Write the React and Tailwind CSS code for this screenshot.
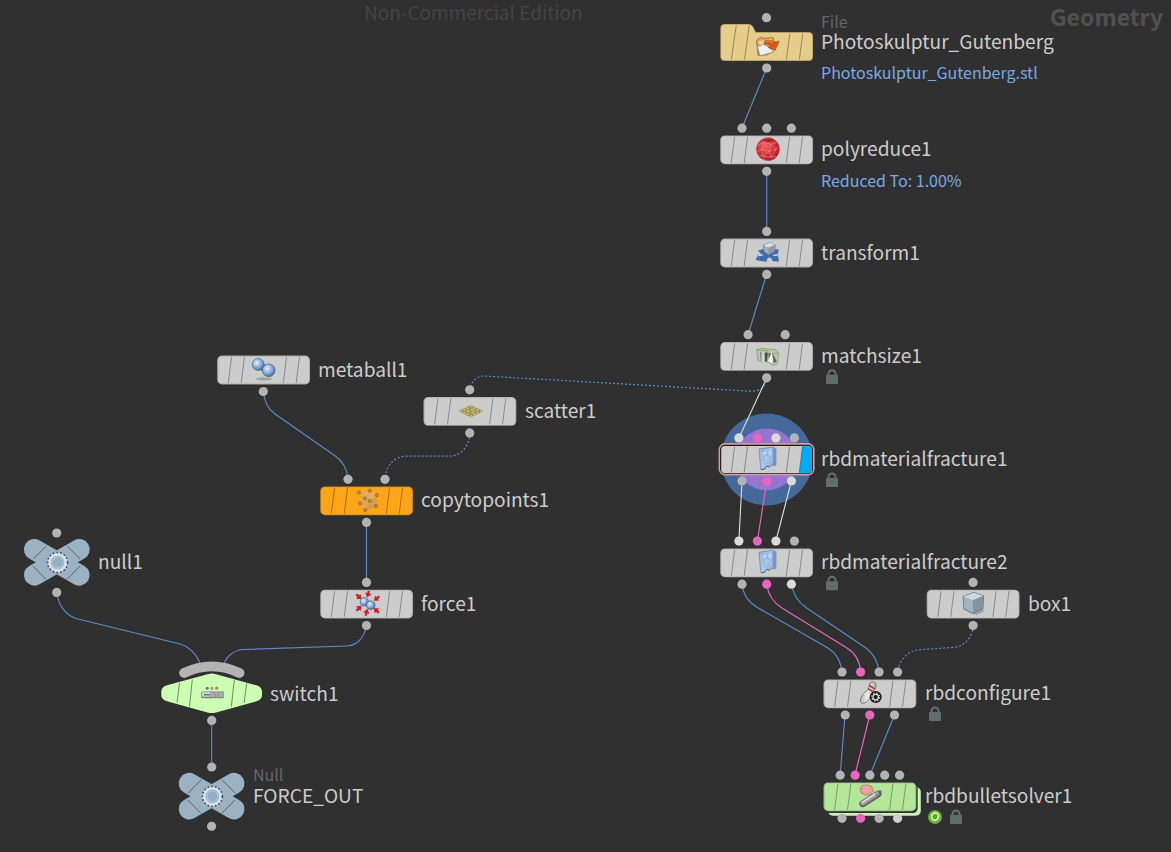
import React from "react";

const WIRE = "#5b8bcb";
const PINK = "#e866bf";
const LIGHT = "#dadada";
const DOT = "#b3b3b3";

/* ---------- icons (24 x 24 boxes) ---------- */

function PolyReduceIcon() {
  return (
    <g>
      <circle cx="12" cy="11.8" r="11.4" fill="url(#redBall)" stroke="#a52a30" strokeWidth=".6" />
      <path
        d="M2 8L8 5L15 7L21 5M8 5L6 12L1.5 14M6 12L13 14L15 7M13 14L20 12L15 7M20 12L22.5 10M6 12L7 19L13 14L15 20L20 12M7 19L15 20M3.5 18L7 19L9 22.5M15 20L20 19"
        fill="none"
        stroke="#f08c8c"
        strokeWidth=".6"
      />
      <path d="M6 3.4Q12 .2 18 3.4L12 4.8Z" fill="#8f1219" opacity=".75" />
    </g>
  );
}

function TransformIcon() {
  return (
    <g>
      <path
        d="M2 10L7.5 8.6L18 8.6L22.8 9.2L21.8 13.4L18.5 14L22 15L22.8 20L16.5 19.6L14.5 17L12 17.2L10.5 20.4L0 18.6L2.2 14.4L5.2 13.8Z"
        fill="#3d6dad"
      />
      <path d="M0 18.6L10.5 20.4V21.2L0 19.6ZM16.5 19.6L22.8 20V20.9L16.5 20.4Z" fill="#27497c" />
      <path d="M5.2 13.8L8 14.5L3.5 15.8L2.2 14.4ZM18.5 14L16 14.4L19.5 15.6L22 15Z" fill="#dfe5ea" />
      <path d="M7.3 4.5L14.3 1.8L19.3 4.3L18.6 10.8L12.5 14.2L8 11.2Z" fill="#a3b0ba" stroke="#6e7a85" strokeWidth=".7" />
      <path d="M7.6 4.6L14.3 2.1L19 4.3L12.5 7.2Z" fill="#d5dde3" />
      <path d="M12.5 7.2L19 4.4L18.3 10.7L12.5 13.8Z" fill="#8c9aa7" />
    </g>
  );
}

function MatchSizeIcon() {
  return (
    <g>
      <path d="M.5 6L6 4.5L20 6L22.5 9L21.5 19L17 21.5L11 17.5L2 17Z" fill="#b3c6a0" opacity=".8" />
      <path
        d="M.5 6L12 7M.5 6L2 17L12 18M.5 6L6 4.5L20 6L22.5 9L21.5 20L17 21.5M12 10L22.5 9M12 7V18L17 21.5"
        fill="none"
        stroke="#84a26c"
        strokeWidth=".8"
      />
      <path d="M4 8.6Q7.8 7 11.4 8.6L11 17Q8 18.7 4.8 17Z" fill="url(#steel)" />
      <path d="M8.8 9L11.5 8.8L11 17.2L9.2 17.8Z" fill="#474e45" />
      <path d="M12.2 9.5L15.6 9.5L13 15.5Z" fill="#6a7264" />
      <path d="M16 8L20.8 17.3Q16.5 21 11.8 17Z" fill="#f0f2ee" />
      <path d="M16 8L20.8 17.3Q19.4 19 17.4 19Z" fill="#5f665b" />
    </g>
  );
}

function FractureIcon() {
  return (
    <g>
      <path
        d="M3 2L16.5 0L20 1.5L19.8 18L16.5 18.8L15 17.5L13.7 20L11 19L8.5 22L5 22.5L4.3 17Z"
        fill="url(#glass)"
        stroke="#7187a6"
        strokeWidth=".8"
      />
      <path d="M16.5 .5L20 1.5L19.8 18L16.8 18.5Z" fill="#7796c4" />
      <path d="M5 4L9 3.5M12 3L11.3 8L14 10L12 15M11.3 8L6 10M14 10L16.5 9M4.5 13L8 12.5L9 17" fill="none" stroke="#8aa6cf" strokeWidth=".6" />
      <path d="M7 5.5L9.5 5L9 7.5ZM12.5 5L15 4.5L14 7Z" fill="#dceafb" />
      <path d="M5 22.5L8.5 22L11 19L13.7 20" fill="none" stroke="#4f6382" strokeWidth=".9" />
    </g>
  );
}

function BoxIcon() {
  return (
    <g>
      <path d="M10 22L20 17L22 20L14 23.5Z" fill="#8b8b8b" opacity=".6" />
      <path d="M.7 5L11.5 1L21 4.2L20.3 16.8L10.6 22L1.5 17.2Z" fill="#9fb0bc" stroke="#6e777e" strokeWidth="1.2" />
      <path d="M.9 5L11.5 1.2L20.8 4.2L10.5 8.7Z" fill="#cdd8df" />
      <path d="M10.5 8.7L20.8 4.3L20 16.7L10.5 21.6Z" fill="#8394a1" />
      <path d="M1 5.4L10.5 8.7V21.3L1.8 17Z" fill="#a3b4c0" />
    </g>
  );
}

function ConfigureIcon() {
  return (
    <g>
      <path
        d="M12.5.6Q16.8.4 16.8 4.3Q16.5 7 14.3 9.4Q13 13 10.5 17Q7 22.6 3 22.3Q.3 21.5 1.3 17.5Q3 12.5 8 8.7Q10 6.5 10 4Q10.2 1.2 12.5.6Z"
        fill="url(#pin)"
        stroke="#74726b"
        strokeWidth=".9"
      />
      <path d="M10 4.2L15.8 7.8M8.8 7.3L13.4 10.2" stroke="#a83a42" strokeWidth="1.6" />
      <circle cx="16.4" cy="15.8" r="6" fill="#1a1a1a" />
      <circle cx="16.4" cy="15.8" r="2.7" fill="none" stroke="#d6d6d6" strokeWidth="1.3" />
      <circle cx="16.4" cy="15.8" r="3.9" fill="none" stroke="#d6d6d6" strokeWidth="1.3" strokeDasharray="1.5 1.56" />
    </g>
  );
}

function BulletIcon() {
  return (
    <g>
      <path d="M.5 4L3 1.2L8 .6L12.5 2.2L13.8 6L12 10L6.5 11L2 8.8Z" fill="#e39c9c" stroke="#b57373" strokeWidth=".8" />
      <path d="M3 3.5L7 2L11 4M7 2L6.5 6L11.5 7M2.5 6.5L6.5 6L6 10" fill="none" stroke="#efb9b9" strokeWidth=".7" />
      <path d="M3.4 19.6L18.8 9.8" stroke="#58585a" strokeWidth="6.6" strokeLinecap="round" />
      <path d="M3.3 19L18.5 9" stroke="#a0a0a2" strokeWidth="4.6" strokeLinecap="round" />
      <path d="M3 18L17 8.8" stroke="#e0e0e2" strokeWidth="1.5" strokeLinecap="round" />
      <path d="M5 21L19 11.8" stroke="#77777a" strokeWidth="1.2" />
      <path d="M15.5 7.2L19 12.6" stroke="#5e5e61" strokeWidth=".9" />
      <path d="M18 6.2L22 6.2L22.3 9L20.8 11Z" fill="#5a6678" />
    </g>
  );
}

function MetaballIcon() {
  return (
    <g>
      <ellipse cx="11" cy="21.4" rx="8" ry="1.6" fill="#8c948c" opacity=".7" />
      <path d="M8 5L17 10L13 16L5 11Z" fill="#4d76ad" />
      <circle cx="5.2" cy="7" r="6" fill="url(#blueBall)" stroke="#44699b" strokeWidth=".7" />
      <circle cx="15.7" cy="12.8" r="6.3" fill="url(#blueBall)" stroke="#365a8d" strokeWidth=".7" />
    </g>
  );
}

function ScatterIcon() {
  const pts = [[1.2, 12], [4.8, 10.6], [8, 9], [11.5, 7.2], [15, 9], [18.3, 10.7], [21.7, 12], [18, 13.8], [14.8, 15.4], [11.5, 17.3], [8, 15.4], [4.8, 13.6], [9, 12], [13, 10.8], [14, 13.2]];
  return (
    <g>
      <path d="M0 12.2L11.5 6.8L23 12.2L11.5 18Z" fill="#9c9877" stroke="#77745a" strokeWidth=".7" />
      {pts.map(([x, y]) => (
        <circle key={x + "-" + y} cx={x} cy={y} r="1.25" fill="#d8cb68" stroke="#958c4c" strokeWidth=".4" />
      ))}
    </g>
  );
}

function CopyIcon() {
  const pts = [[3, 4.3], [13.7, 2.4], [21, 6.7], [20, 17.7], [9.3, 21.7], [4, 15], [9, 10], [13.7, 12.7]];
  return (
    <g>
      <path d="M4.5 5.5L13.5 3L21 7L20.3 18L10.5 22L4 16Z" fill="#dfa64e" />
      <path d="M4.5 5.5L13.7 12.7L21 7L13.5 3Z" fill="#e2ad5b" />
      <path d="M13.7 12.7L21 7L20.3 18L10.5 22Z" fill="#d59c46" />
      {pts.map(([x, y]) => (
        <circle key={x + "-" + y} cx={x} cy={y} r="1.6" fill="#c08a55" stroke="#935f28" strokeWidth=".7" />
      ))}
    </g>
  );
}

function ForceIcon() {
  const arrows = [[3.1, 5.4, 42], [12, 2.9, 105], [20.3, 7.2, 140], [3.2, 16.4, -42], [10.6, 20.3, -75], [20, 18.6, -138]];
  return (
    <g>
      {arrows.map(([x, y, r]) => (
        <path key={r} transform={`translate(${x} ${y}) rotate(${r})`} d="M-3.8-1.2H-1.2V-3.3L3.2 0L-1.2 3.3V1.2H-3.8Z" fill="#cf2027" />
      ))}
      <circle cx="8.3" cy="10.2" r="4.1" fill="url(#blueBall)" stroke="#44699b" strokeWidth=".7" />
      <circle cx="14.7" cy="13.6" r="4.3" fill="url(#blueBall)" stroke="#365a8d" strokeWidth=".7" />
    </g>
  );
}

function FileIcon() {
  return (
    <g>
      <path d="M.5 3.5L4.5.5L8 1.5L17 .8L18.3 5L12 18L2 18.5Z" fill="#d8a066" stroke="#9c6a35" strokeWidth=".8" />
      <path d="M2 4.5L16 1.5L15 5L4 10Z" fill="#f0cfa0" />
      <path d="M1.2 9.5L5 9L7 7L13 10.5L17.8 15.3L4 19Z" fill="#eef0f3" stroke="#8f8475" strokeWidth=".8" />
      <path d="M8.5 4.2Q13.5 1.6 17.8 5.2L23.2 4.4L19.2 13.6L12 10.6L14.6 9.4Q12 6.4 8.5 7.4Z" fill="#d65a14" stroke="#b04309" strokeWidth=".5" />
      <path d="M10 4.8Q14 3.2 17 6.2" fill="none" stroke="#f0954f" strokeWidth="1" />
    </g>
  );
}

/* ---------- pieces of the graph ---------- */

const TILE_LINES = [14.6, 27.5, 69.6, 82.5];

function Tile({ x, y, fill = "#cccccc", edge = "#aaaaaa", icon: Icon, flag }) {
  return (
    <g transform={`translate(${x} ${y})`}>
      <rect x=".2" y=".4" width="92.8" height="28.8" rx="4.7" fill={edge} />
      <rect x="1.2" y="1.2" width="90.8" height="27.2" rx="3.8" fill={fill} />
      {flag && <path d="M82.5 1L79.3 28.2H88.5Q92 28.2 92 25V4.5Q92 1 88.5 1Z" fill="#00adf2" />}
      {TILE_LINES.map((l) => (
        <path key={l} d={`M${l} 1.8L${l - 3.3} 27.8`} stroke="#000" strokeOpacity=".33" strokeWidth="1" />
      ))}
      <g transform="translate(36 2.3)">
        <Icon />
      </g>
    </g>
  );
}

function NullNode({ x, y }) {
  return (
    <g transform={`translate(${x} ${y})`}>
      <path d="M-22.4-12.8L22.4 12.8M22.4-12.8L-22.4 12.8" stroke="#9bb2c5" strokeWidth="21" strokeLinecap="round" />
      <path d="M-10.3-16.5L-23.5-3.2M10.3-16.5L23.5-3.2M-24 3.6L-10.8 17M23.5 3.6L10.3 17" stroke="#566573" strokeWidth="1" />
      <circle cx=".8" cy=".2" r="8.4" fill="#8dabc4" stroke="#dbe0e4" strokeWidth="3.2" />
      <circle cx=".8" cy=".2" r="10" fill="none" stroke="#3f4a54" strokeWidth="1.5" strokeDasharray="1.7 2.1" />
      <circle cx=".8" cy=".2" r="5.6" fill="#8fb0cb" stroke="#b4c6d4" strokeWidth="1.2" />
    </g>
  );
}

function SwitchNode() {
  return (
    <g>
      <path d="M184 673Q211.7 659.8 239.6 673" fill="none" stroke="#b3b3b3" strokeWidth="9.8" strokeLinecap="round" />
      <path
        d="M167 685.3L207.5 674.2Q211.7 673 216 674.2L256.5 685.3Q262 687.2 262 691.5V695.3Q262 699.5 256.5 701.3L216 712.4Q211.7 713.6 207.5 712.4L167 701.3Q161.3 699.5 161.3 695.3V691.5Q161.3 687.2 167 685.3Z"
        fill="#ccffb3"
      />
      <path d="M179.5 683L177 702.7M192.3 679.5L189.5 706.7M234.3 680L231.3 706.7M246.7 683.3L244 703" stroke="#718a66" strokeWidth="1" />
      <g>
        <circle cx="207.2" cy="688.2" r="1.5" fill="#6b7f78" />
        <circle cx="211.9" cy="688.2" r="1.5" fill="#8b9c92" />
        <circle cx="216.7" cy="688.2" r="1.6" fill="#dc7443" />
        <rect x="201.2" y="691.5" width="22.6" height="6.8" rx="1.4" fill="#7d8385" />
        <rect x="202" y="692.3" width="8.5" height="4.4" rx="1" fill="#d3d7d8" />
        <path d="M203.8 694.8H210" stroke="#585d5f" strokeWidth="1.2" />
        <rect x="210.5" y="692.3" width="12.5" height="4.9" rx="1.5" fill="#a9afb0" />
        <path d="M215 692.5V697M218.2 692.5V697" stroke="#7d8284" strokeWidth=".7" />
      </g>
    </g>
  );
}

function Lock({ x, y }) {
  return (
    <g transform={`translate(${x} ${y})`}>
      <path d="M-3.5-2V-3.4A3.5 3.5 0 0 1 3.5-3.4V-2" fill="none" stroke="#65716f" strokeWidth="2" />
      <rect x="-6" y="-2.4" width="12" height="9.1" rx=".6" fill="#5f6e6b" />
    </g>
  );
}

const dots = [
  [766.5, 17.7], [766.7, 68], [742, 128.2], [766.7, 128.2], [791.4, 128.2], [766.7, 171.3],
  [766.7, 231.4], [766.7, 274.4], [748.1, 334.7], [785.2, 334.7], [766.7, 377.8],
  [738.9, 437.9, LIGHT], [757.4, 437.9, PINK], [775.9, 437.9, LIGHT], [794.4, 437.9],
  [742, 481], [766.7, 481, PINK], [791.4, 481, LIGHT],
  [738.9, 541.1, LIGHT], [757.4, 541.1, PINK], [775.9, 541.1, LIGHT], [794.4, 541.1],
  [742, 584.2], [766.7, 584.2, PINK], [791.4, 584.2, LIGHT],
  [973.1, 582.4], [973.1, 625.5],
  [842, 672], [860.6, 672, PINK], [879.1, 672], [897.6, 672],
  [845.2, 715], [869.8, 715, PINK], [894.5, 715],
  [840.2, 775.2], [855.1, 775.2, PINK], [869.9, 775.2], [884.7, 775.2], [899.6, 775.2],
  [263.3, 391.5], [469.7, 389.8], [469.7, 432.9], [348, 479.3], [385, 479.3],
  [366.5, 522.4], [366.5, 582.4], [366.5, 625.5],
  [56.7, 533], [56.7, 592.4], [211.7, 720.4], [211.7, 767], [211.6, 826.3],
];

const lowerDots = [[842, 818.3], [860.6, 818.3, PINK], [879.1, 818.3], [897.6, 818.3, "#d0d0d0"]];

const wires = [
  ["M766.7 68L742 128"],
  ["M766.7 171V231"],
  ["M766.7 274L748 335"],
  ["M263.4 391C264 401 268 409 275 414L335 455.7C343 461 347 469 348 479"],
  ["M366.5 522V582"],
  ["M56.7 592C58 604 65 615 76 618.5L180 644C189 646.5 197 655 200 663"],
  ["M366.5 625C365 636 358 645.5 347 646L243 649.5C234 650 226 657 224 664"],
  ["M211.7 720V767"],
  ["M742 584C743 594 749 602.5 757 607.2L828 648C836 653 841 662 842 672"],
  ["M791.4 584C793 594 798 602 806 607.4L866 648C874 654 878 662 879 672"],
  ["M766.7 584C768 594 774 603 782 608L847 648C855 653 860 662 860.6 672", PINK],
  ["M845 715L840.2 775"],
  ["M894.5 715L870 775"],
  ["M869.8 715L855 775", PINK],
  ["M766.7 378L738.9 438", LIGHT],
  ["M742 481L738.9 541", LIGHT],
  ["M766.7 481L757.4 541", PINK],
  ["M791.4 481L775.9 541", LIGHT],
];

const dotted = [
  "M766 381C765 387 760 391.6 750 391.2L484 376C477 376 472 381 470.5 387",
  "M469.6 437C467 449 460 456 449 456.2H406C395 456.5 387 464 385.5 476",
  "M972.8 630C970 640 963 647 953 647.4L919 649.8C909 650.5 900 659 898.2 669",
];

const Dot = ([x, y, c = DOT]) => <circle key={x + "/" + y} cx={x} cy={y} r="4.6" fill={c} />;

const names = [
  { t: "Photoskulptur_Gutenberg", x: 821, y: 42 },
  { t: "polyreduce1", x: 821, y: 149 },
  { t: "transform1", x: 821, y: 253 },
  { t: "matchsize1", x: 821, y: 356 },
  { t: "rbdmaterialfracture1", x: 821, y: 459 },
  { t: "rbdmaterialfracture2", x: 821, y: 562 },
  { t: "box1", x: 1028, y: 604 },
  { t: "rbdconfigure1", x: 925, y: 693 },
  { t: "rbdbulletsolver1", x: 925, y: 796 },
  { t: "metaball1", x: 318, y: 370 },
  { t: "scatter1", x: 525, y: 411 },
  { t: "copytopoints1", x: 421, y: 500 },
  { t: "force1", x: 421, y: 604 },
  { t: "null1", x: 98, y: 562 },
  { t: "switch1", x: 270, y: 694 },
  { t: "FORCE_OUT", x: 253, y: 796 },
];

function Label({ x, y, className, children }) {
  return (
    <span className={"absolute flex h-5 items-center whitespace-nowrap leading-none " + className} style={{ left: x, top: y - 10 }}>
      {children}
    </span>
  );
}

export default function App() {
  return (
    <main className="relative h-[852px] w-[1171px] overflow-hidden bg-[#303030] font-['Noto_Sans_CJK_SC','Noto_Sans',sans-serif]">
      <Label x={364} y={11} className="text-[19px] text-[#454545]">Non-Commercial Edition</Label>
      <Label x={1050} y={17} className="text-[23.1px] font-bold text-[#505050]">Geometry</Label>

      <svg className="absolute inset-0" width="1171" height="852" viewBox="0 0 1171 852">
        <defs>
          <radialGradient id="redBall" cx=".4" cy=".35" r=".7">
            <stop offset="0" stopColor="#ee686c" />
            <stop offset=".55" stopColor="#d52f37" />
            <stop offset="1" stopColor="#b01a24" />
          </radialGradient>
          <radialGradient id="blueBall" cx=".38" cy=".35" r=".7">
            <stop offset="0" stopColor="#e6f0f8" />
            <stop offset=".45" stopColor="#97bade" />
            <stop offset="1" stopColor="#3d6cab" />
          </radialGradient>
          <linearGradient id="glass" x1="0" y1="0" x2="1" y2="1">
            <stop offset="0" stopColor="#93b3de" />
            <stop offset=".5" stopColor="#adc8ea" />
            <stop offset="1" stopColor="#7f9fce" />
          </linearGradient>
          <linearGradient id="steel">
            <stop offset="0" stopColor="#62695f" />
            <stop offset=".4" stopColor="#e4e7e2" />
            <stop offset="1" stopColor="#60665d" />
          </linearGradient>
          <linearGradient id="pin">
            <stop offset="0" stopColor="#b6bbaf" />
            <stop offset=".45" stopColor="#ececE5" />
            <stop offset="1" stopColor="#b5b5aa" />
          </linearGradient>
        </defs>

        <circle cx="766.6" cy="459.4" r="46" fill="#46699c" />
        <circle cx="766.6" cy="459.4" r="31" fill="#9575cd" />

        {dotted.map((d) => (
          <path key={d} d={d} fill="none" stroke={WIRE} strokeWidth="1.2" strokeDasharray="2 2" />
        ))}
        {wires.map(([d, c = WIRE]) => (
          <path key={d} d={d} fill="none" stroke={c} strokeWidth="1.15" />
        ))}

        <g>
          <path d="M725 24H749Q751.5 24 753 26.5L756 32H808.5Q813 32 813 36.5V56.5Q813 61 808.5 61H725Q720.3 61 720.3 56.5V28.5Q720.3 24 725 24Z" fill="#b8a26c" />
          <path d="M725 24.8H749Q751 24.8 752.3 27L755.5 32.9H808.5Q812.1 32.9 812.1 36.5V56.5Q812.1 60.1 808.5 60.1H725Q721.2 60.1 721.2 56.5V28.5Q721.2 24.8 725 24.8Z" fill="#e6cd8c" />
          <path d="M736.3 25.3L731.3 59.5M749.3 25.3L744.5 59.5M789.8 33.5L786.4 59.5M802.7 33.5L799.4 59.5" stroke="#978658" strokeWidth="1" />
          <g transform="translate(756 36.8)">
            <FileIcon />
          </g>
        </g>

        <Tile x={720} y={135} icon={PolyReduceIcon} />
        <Tile x={720} y={238.2} icon={TransformIcon} />
        <Tile x={720} y={341.6} icon={MatchSizeIcon} />
        <rect x="718.6" y="443" width="96" height="32.4" rx="6.5" fill="#d39c9a" />
        <rect x="720.3" y="444.8" width="92.6" height="28.9" rx="5" fill="#1b1b1b" />
        <Tile x={720} y={444.8} icon={FractureIcon} edge="#1b1b1b" flag />
        <Tile x={720} y={548} icon={FractureIcon} />
        <Tile x={926.5} y={589.3} icon={BoxIcon} />
        <Tile x={823.3} y={679} icon={ConfigureIcon} />

        <rect x="828" y="787" width="92.8" height="28.7" rx="5" fill="#ccf5b8" />
        <rect x="823.7" y="783.5" width="94" height="29.6" rx="5" fill="#303030" />
        <Tile x={823.3} y={782} icon={BulletIcon} fill="#b4e699" edge="#91ba7d" />

        <Tile x={217} y={355.2} icon={MetaballIcon} />
        <Tile x={423.3} y={396.6} icon={ScatterIcon} />
        <Tile x={320} y={486} icon={CopyIcon} fill="#ffa519" edge="#c78622" />
        <Tile x={320} y={589.3} icon={ForceIcon} />
        <NullNode x={56.8} y={562.3} />
        <NullNode x={211.6} y={796.2} />
        <SwitchNode />

        {dots.map(Dot)}
        {lowerDots.map(Dot)}

        <Lock x={832} y={377.2} />
        <Lock x={832} y={480.4} />
        <Lock x={832} y={583.6} />
        <Lock x={935} y={714.3} />
        <Lock x={956} y={817.4} />
        <circle cx="935" cy="817" r="7" fill="#58a618" />
        <circle cx="935" cy="817" r="5.6" fill="none" stroke="#8cc95a" strokeWidth=".8" />
        <ellipse cx="935" cy="816.6" rx="3.4" ry="3.7" transform="rotate(25 935 816.6)" fill="none" stroke="#e3f2d6" strokeWidth="1.8" />
      </svg>

      {names.map((n) => (
        <Label key={n.t} x={n.x} y={n.y} className="text-[19.15px] text-[#cccccc]">{n.t}</Label>
      ))}
      <Label x={821} y={21} className="text-[16px] text-[#666666]">File</Label>
      <Label x={253} y={774} className="text-[16px] text-[#666666]">Null</Label>
      <Label x={821} y={72} className="text-[16px] text-[#77aae6]">Photoskulptur_Gutenberg.stl</Label>
      <Label x={821} y={180} className="text-[16px] text-[#77aae6]">Reduced To: 1.00%</Label>
    </main>
  );
}
